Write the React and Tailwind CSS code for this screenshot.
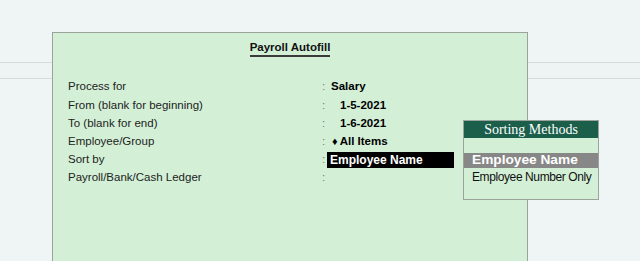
export default function App() {
  const rows = [
    { label: 'Process for', value: 'Salary', indent: false },
    { label: 'From (blank for beginning)', value: '1-5-2021', indent: true },
    { label: 'To (blank for end)', value: '1-6-2021', indent: true },
    { label: 'Employee/Group', value: 'All Items', diamond: true },
    { label: 'Sort by', value: 'Employee Name', selected: true },
    { label: 'Payroll/Bank/Cash Ledger', value: '' },
  ]

  return (
    <div
      className="relative h-[261px] w-[640px] overflow-hidden bg-[#eef5f4]"
      style={{ fontFamily: '"Liberation Sans", Arial, sans-serif' }}
    >
      {/* background bars behind the window */}
      <div className="h-[62px]" />
      <div className="h-[17px] border-y border-[#d6dcdb] bg-[#edf4f3]" />

      {/* main window */}
      <div className="absolute left-[52px] top-[32px] h-[240px] w-[476px] border border-[#9aa39c] bg-[#d3f0d6]">
        <div className="flex h-[30px] items-center justify-center pt-[1px]">
          <span className="border-b-2 border-[#3a3a3a] pb-[1px] text-[11.5px] font-bold leading-[14px] text-[#111]">
            Payroll Autofill
          </span>
        </div>
        <div className="mt-[15px] pl-[15px]">
          {rows.map((r) => (
            <div key={r.label} className="flex h-[18.2px] items-center text-[11.5px] text-[#222]">
              <div className="w-[254px]">{r.label}</div>
              <div className="w-[8px] text-[#777]">:</div>
              {r.selected ? (
                <div className="ml-[-3px] flex h-[16px] w-[127px] items-center bg-black pl-[3px] text-[12px] font-bold text-white">
                  {r.value}
                </div>
              ) : r.diamond ? (
                <div className="ml-[2px] flex items-center font-bold text-black">
                  <span className="mr-[2px] text-[11px] leading-none">♦</span>
                  {r.value}
                </div>
              ) : (
                <div className={`font-bold text-black ${r.indent ? 'ml-[10px]' : 'ml-[1px]'}`}>{r.value}</div>
              )}
            </div>
          ))}
        </div>
      </div>

      {/* sorting methods popup */}
      <div className="absolute left-[463px] top-[120px] w-[136px] border border-[#9aa39c] bg-[#d3f0d6]">
        <div
          className="flex h-[17px] items-center justify-center bg-[#1b5e4a] text-[14px] leading-none text-white"
          style={{ fontFamily: '"Liberation Serif", "Times New Roman", serif' }}
        >
          Sorting Methods
        </div>
        <div className="h-[15px]" />
        <div className="flex h-[15px] items-center bg-[#878787] pl-[8px] text-[13.7px] font-bold text-white">
          Employee Name
        </div>
        <div className="flex h-[18px] items-center pl-[8px] text-[12px] tracking-[-0.4px] text-[#111]">
          Employee Number Only
        </div>
        <div className="h-[13px]" />
      </div>
    </div>
  )
}
